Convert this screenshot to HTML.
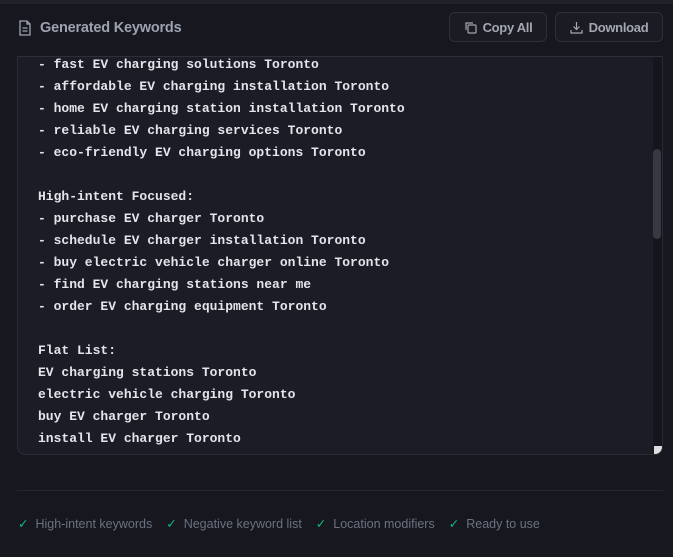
<!DOCTYPE html>
<html><head><style>
body{margin:0;width:673px;height:557px;background:#16171f;font-family:"Liberation Sans",sans-serif;position:relative;overflow:hidden}
.top{position:absolute;left:0;top:0;width:673px;height:4px;background:#1f2228}
.title{position:absolute;left:18px;top:20px;color:#9ca3af;font-size:14.5px;font-weight:bold;display:flex;align-items:center;gap:8px;letter-spacing:-0.2px}
.btn{position:absolute;top:12px;height:30px;border:1px solid #2e3039;border-radius:6px;background:#1a1b23;color:#a3a7b0;font-size:13px;font-weight:bold;letter-spacing:-0.3px;display:flex;align-items:center;justify-content:center;gap:6px;box-sizing:border-box}
.box{position:absolute;left:17px;top:56px;width:646px;height:399px;box-sizing:border-box;border:1px solid #2a2c35;border-top-color:#2e3039;border-radius:0 0 8px 8px;background:#1b1c25;overflow:hidden}
pre{margin:0;position:absolute;left:20px;top:-3px;font-family:"Liberation Mono",monospace;font-size:13px;line-height:22px;color:#e3e5ea;font-weight:bold}
.sb{position:absolute;right:0;top:0;width:9px;height:100%;background:#15161d}
.th{position:absolute;right:1px;top:92px;width:8px;height:90px;border-radius:4px;background:#373841}
.grip{position:absolute;right:0;bottom:0;width:8px;height:8px;background:#ddd}
.hr{position:absolute;left:17px;top:490px;width:646px;height:1px;background:#262830}
.foot{position:absolute;left:18px;top:516px;font-size:12.5px;color:#6b7280;display:flex;gap:14px}
.foot span b{color:#10b981;font-weight:normal;margin-right:7px}
</style></head><body>
<div class="top"></div>
<div class="title"><svg width="14" height="16" viewBox="0 0 14 16" fill="none" stroke="#9ca3af" stroke-width="1.3"><path d="M2 1h7l3 3v11H2z"/><path d="M9 1v3h3M4.5 8h5M4.5 11h5"/></svg>Generated Keywords</div>
<div class="btn" style="left:449px;width:98px"><svg width="13" height="13" viewBox="0 0 13 13" fill="none" stroke="#a3a7b0" stroke-width="1.2"><rect x="4" y="4" width="8" height="8" rx="1"/><path d="M2 9V2h7"/></svg>Copy All</div>
<div class="btn" style="left:555px;width:108px"><svg width="13" height="13" viewBox="0 0 13 13" fill="none" stroke="#a3a7b0" stroke-width="1.2"><path d="M6.5 1v7M3.5 5.5l3 3 3-3M1 9v3h11V9"/></svg>Download</div>
<div class="box"><pre>- fast EV charging solutions Toronto
- affordable EV charging installation Toronto
- home EV charging station installation Toronto
- reliable EV charging services Toronto
- eco-friendly EV charging options Toronto

High-intent Focused:
- purchase EV charger Toronto
- schedule EV charger installation Toronto
- buy electric vehicle charger online Toronto
- find EV charging stations near me
- order EV charging equipment Toronto

Flat List:
EV charging stations Toronto
electric vehicle charging Toronto
buy EV charger Toronto
install EV charger Toronto</pre><div class="sb"><div class="th"></div></div><div class="grip"></div></div>
<div class="hr"></div>
<div class="foot"><span><b>✓</b>High-intent keywords</span><span><b>✓</b>Negative keyword list</span><span><b>✓</b>Location modifiers</span><span><b>✓</b>Ready to use</span></div>
</body></html>
